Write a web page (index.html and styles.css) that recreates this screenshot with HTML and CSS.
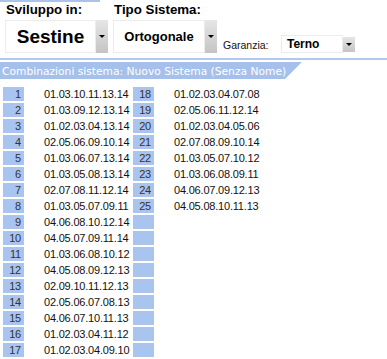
FILE: index.html
```html
<!DOCTYPE html>
<html>
	<head>
		<meta charset="UTF-8">
		<title>Sviluppo sistema</title>
		<link rel="stylesheet" href="styles.css">
	</head>
	<body>
		<div class="tab-edge"></div>
		<div class="top">
			<div class="group g1">
				<div class="label">Sviluppo in:</div>
				<div class="select big">
					<div class="field">Sestine</div>
					<div class="btn"><span class="arrow"></span></div>
				</div>
			</div>
			<div class="group g2">
				<div class="label">Tipo Sistema:</div>
				<div class="select big">
					<div class="field mid">Ortogonale</div>
					<div class="btn"><span class="arrow"></span></div>
				</div>
			</div>
			<div class="gar">
				<span class="gar-label">Garanzia:</span>
				<div class="select small">
					<div class="field">Terno</div>
					<div class="btn"><span class="arrow"></span></div>
				</div>
			</div>
		</div>
		<div class="rule"></div>
		<div class="bar">Combinazioni sistema: Nuovo Sistema (Senza Nome)</div>
		<div class="list">
			<div class="col" id="col1"></div>
			<div class="col" id="col2"></div>
		</div>
		<script type="text/javascript">
			var combos = [
				"01.03.10.11.13.14", "01.03.09.12.13.14", "01.02.03.04.13.14", "02.05.06.09.10.14",
				"01.03.06.07.13.14", "01.03.05.08.13.14", "02.07.08.11.12.14", "01.03.05.07.09.11",
				"04.06.08.10.12.14", "04.05.07.09.11.14", "01.03.06.08.10.12", "04.05.08.09.12.13",
				"02.09.10.11.12.13", "02.05.06.07.08.13", "04.06.07.10.11.13", "01.02.03.04.11.12",
				"01.02.03.04.09.10", "01.02.03.04.07.08", "02.05.06.11.12.14", "01.02.03.04.05.06",
				"02.07.08.09.10.14", "01.03.05.07.10.12", "01.03.06.08.09.11", "04.06.07.09.12.13",
				"04.05.08.10.11.13"
			];
			//riempie una colonna di 17 righe
			function fill(col, start) {
				var box = document.getElementById(col);
				for (var i = start; i < start + 17; i++) {
					var row = document.createElement("div");
					row.className = "row";
					var num = document.createElement("div");
					num.className = "num";
					var txt = document.createElement("div");
					txt.className = "combo";
					if (i < combos.length) {
						num.textContent = i + 1;
						txt.textContent = combos[i];
					}
					row.appendChild(num);
					row.appendChild(txt);
					box.appendChild(row);
				}
			}
			fill("col1", 0);
			fill("col2", 17);
		</script>
	</body>
</html>
```

FILE: styles.css
```css
* {
	margin: 0;
	padding: 0;
	box-sizing: border-box;
}
body {
	width: 387px;
	height: 359px;
	overflow: hidden;
	background: #fff;
	font-family: "Liberation Sans", Arial, sans-serif;
	color: #000;
}
.tab-edge {
	width: 100px;
	height: 2px;
	background: #a9c3ec;
}
.top {
	display: flex;
	height: 56px;
	padding-left: 5px;
}
.group {
	display: flex;
	flex-direction: column;
}
.g1 {
	width: 103px;
	margin-right: 5px;
}
.g2 {
	width: 104px;
	margin-right: 6px;
}
.label {
	font-size: 13.3px;
	font-weight: bold;
	line-height: 15px;
	padding-left: 1px;
	height: 18px;
}
.select {
	display: flex;
}
.select.big {
	height: 33px;
}
.field {
	flex: 1;
	background: #fff;
	border: 1px solid #ececec;
	font-weight: bold;
	display: flex;
	align-items: center;
	justify-content: center;
}
.big .field {
	font-size: 19px;
}
.big .field.mid {
	font-size: 13px;
}
.btn {
	width: 12px;
	background: linear-gradient(to bottom, #e6e6e6, #c4c4c4);
	display: flex;
	align-items: center;
	justify-content: center;
}
.arrow {
	width: 0;
	height: 0;
	border-left: 3px solid transparent;
	border-right: 3px solid transparent;
	border-top: 3px solid #000;
}
.gar {
	display: flex;
	align-items: center;
	margin-top: 33px;
	height: 18px;
}
.gar-label {
	font-size: 10.5px;
	width: 58px;
	color: #111;
	padding-top: 2px;
}
.select.small {
	width: 74px;
	height: 18px;
}
.small .field {
	justify-content: flex-start;
	padding-left: 5px;
	font-size: 12px;
}
.small .btn {
	height: 15px;
	align-self: center;
}
.rule {
	height: 2px;
	background: #b2c9ee;
	margin-bottom: 2px;
}
.bar {
	width: 302px;
	height: 17px;
	padding: 3px 0 0 2px;
	background: #a5c1eb;
	clip-path: polygon(0 0, 302px 0, 285px 100%, 0 100%);
	color: #fff;
	font-family: "DejaVu Sans", Verdana, sans-serif;
	font-size: 10.7px;
	line-height: 14px;
	white-space: nowrap;
}
.list {
	display: flex;
	padding-left: 3px;
	margin-top: 8px;
}
.row {
	display: flex;
	height: 14px;
	margin-bottom: 2px;
	font-size: 11px;
	line-height: 14px;
	letter-spacing: -0.2px;
}
.num {
	width: 21px;
	background: #a9c5ef;
	color: #333;
	text-align: right;
	padding-right: 3px;
}
.combo {
	width: 109px;
	padding-left: 20px;
	color: #111;
}
```
